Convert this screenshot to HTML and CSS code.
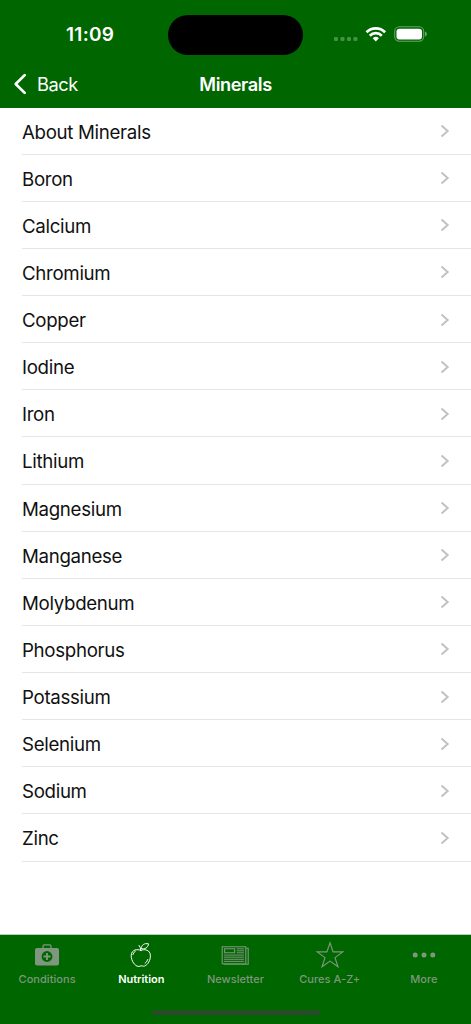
FILE: index.html
```html
<!DOCTYPE html>
<html lang="en">
<head>
<meta charset="utf-8">
<title>Minerals</title>
<link rel="stylesheet" href="styles.css">
</head>
<body>
<div class="screen">
  <header class="header">
    <div class="status">
      <div class="time">11:09</div>
      <div class="island"></div>
      <svg class="indicators" width="96" height="20" viewBox="0 0 96 20">
        <g fill="#fff" fill-opacity=".28"><rect x="3" y="11" width="4" height="4" rx="1.3"/><rect x="9.5" y="11" width="4" height="4" rx="1.3"/><rect x="16" y="11" width="4" height="4" rx="1.3"/><rect x="22.4" y="11" width="4" height="4" rx="1.3"/></g>
        <g fill="none" stroke="#fff" stroke-width="2.7"><path d="M35.5 6.2a13.2 13.2 0 0 1 18.6 0"/><path d="M38.8 9.7a8.4 8.4 0 0 1 12 0"/></g>
        <path d="M44.8 15.4l-3.1-3.2a4.5 4.5 0 0 1 6.2 0z" fill="#fff"/>
        <rect x="63.7" y="0.8" width="29" height="14.4" rx="4.6" fill="none" stroke="#fff" stroke-opacity=".4" stroke-width="1.1"/>
        <rect x="65.5" y="2.7" width="25.5" height="10.7" rx="2.9" fill="#fff"/>
        <path d="M94.1 5.6q1.7.7 1.7 2.4t-1.7 2.4z" fill="#fff" fill-opacity=".5"/>
      </svg>
    </div>
    <nav class="navbar">
      <div class="back">
        <svg width="14" height="22" viewBox="0 0 14 22"><path d="M11.7 2.1L2.7 11l9 8.9" fill="none" stroke="#fff" stroke-width="2.7" stroke-linecap="round" stroke-linejoin="round"/></svg>
        <span class="back-label">Back</span>
      </div>
      <h1 class="title">Minerals</h1>
      <div></div>
    </nav>
  </header>
  <svg class="defs" width="0" height="0"><symbol id="chevron" viewBox="0 0 10 14"><path d="M1.5 1.4L7.7 7l-6.2 5.6" fill="none" stroke="#c2c2c4" stroke-width="2"/></symbol></svg>
  <main class="list">
    <div class="row"><span>About Minerals</span><svg class="chevron"><use href="#chevron"/></svg></div>
    <div class="row"><span>Boron</span><svg class="chevron"><use href="#chevron"/></svg></div>
    <div class="row"><span>Calcium</span><svg class="chevron"><use href="#chevron"/></svg></div>
    <div class="row"><span>Chromium</span><svg class="chevron"><use href="#chevron"/></svg></div>
    <div class="row"><span>Copper</span><svg class="chevron"><use href="#chevron"/></svg></div>
    <div class="row"><span>Iodine</span><svg class="chevron"><use href="#chevron"/></svg></div>
    <div class="row"><span>Iron</span><svg class="chevron"><use href="#chevron"/></svg></div>
    <div class="row"><span>Lithium</span><svg class="chevron"><use href="#chevron"/></svg></div>
    <div class="row"><span>Magnesium</span><svg class="chevron"><use href="#chevron"/></svg></div>
    <div class="row"><span>Manganese</span><svg class="chevron"><use href="#chevron"/></svg></div>
    <div class="row"><span>Molybdenum</span><svg class="chevron"><use href="#chevron"/></svg></div>
    <div class="row"><span>Phosphorus</span><svg class="chevron"><use href="#chevron"/></svg></div>
    <div class="row"><span>Potassium</span><svg class="chevron"><use href="#chevron"/></svg></div>
    <div class="row"><span>Selenium</span><svg class="chevron"><use href="#chevron"/></svg></div>
    <div class="row"><span>Sodium</span><svg class="chevron"><use href="#chevron"/></svg></div>
    <div class="row"><span>Zinc</span><svg class="chevron"><use href="#chevron"/></svg></div>
  </main>
  <footer class="tabs">
    <div class="tab">
      <svg width="30" height="30" viewBox="0 0 30 30"><path d="M11 8V6.2q0-1.4 1.4-1.4h5.2q1.4 0 1.4 1.4V8" fill="none" stroke="currentColor" stroke-width="1.3"/><rect x="3" y="8" width="24" height="17.5" rx="2" fill="currentColor"/><circle cx="15" cy="16.5" r="5.4" fill="#006600"/><path d="M15 13v7M11.5 16.5h7" stroke="currentColor" stroke-width="1.9"/></svg>
      <span>Conditions</span>
    </div>
    <div class="tab active">
      <svg width="30" height="30" viewBox="0 0 30 30" fill="none" stroke="currentColor" stroke-width="1" stroke-linecap="round"><path d="M14.8 10.4C11.7 8.8 5.3 9.3 5.2 15.6c0 5.4 3.8 10.5 7 10.8 1.5.2 2.1-.6 3.1-.6s2 .7 3.3.2c3.2-1.2 5.9-5.8 5.8-10.3-.1-6.1-6.1-7-9.6-5.3z"/><path d="M14.7 10.6q.1-3.3-1.6-5.2M15.1 8.6c.2-3.7 3.2-5.6 7.4-4.8-.4 3.9-3.8 5.9-7.4 4.8zM6.9 14.6q.3-2.4 2.3-3.2M21.8 19.5q-.8 2.5-2.7 3.8"/></svg>
      <span>Nutrition</span>
    </div>
    <div class="tab">
      <svg width="30" height="30" viewBox="0 0 30 30" fill="none" stroke="currentColor"><path d="M2.2 6.7h23.6v17H2.2zM26 8.2h2.2v16H3.6" stroke-width="1.1"/><path d="M4.6 8.7h10v4h-10z" stroke-width="1.1"/><path d="M16.7 8.8h7.3M16.7 10.8h7.3M16.7 12.8h7.3M4 15.1h20M4 17.2h20M4 19.3h20M4 21.4h20" stroke-width=".95"/></svg>
      <span>Newsletter</span>
    </div>
    <div class="tab">
      <svg width="30" height="30" viewBox="0 0 30 30"><path d="M15 2.8l3.1 9.1h9.7L20 17.6l3 9.1-8-5.6-8 5.6 3-9.1-7.8-5.7h9.7z" fill="none" stroke="currentColor" stroke-width="1.15"/></svg>
      <span>Cures A-Z+</span>
    </div>
    <div class="tab">
      <svg width="30" height="30" viewBox="0 0 30 30" fill="currentColor"><circle cx="6.2" cy="15" r="2.5"/><circle cx="15" cy="15" r="2.5"/><circle cx="23.8" cy="15" r="2.5"/></svg>
      <span>More</span>
    </div>
    <div class="home"></div>
  </footer>
</div>
</body>
</html>
```
FILE: styles.css
```css
* { box-sizing: border-box; }
body { margin: 0; background: #fff; font-family: Inter, "Liberation Sans", sans-serif; }
.screen { width: 471px; height: 1024px; display: flex; flex-direction: column; overflow: hidden; }
.header { height: 107.5px; flex: none; background: #006600; color: #fff; }
.status { height: 61px; padding-top: 15px; display: grid; grid-template-columns: 168px 135px 168px; }
.time { padding: 8px 0 0 66px; font-size: 19px; line-height: 24px; font-weight: 600; letter-spacing: 0.3px; }
.island { height: 40px; border-radius: 20px; background: #000; }
.indicators { margin: 11px 0 0 28px; }
.navbar { height: 46px; display: grid; grid-template-columns: 1fr auto 1fr; align-items: center; }
.back { display: flex; align-items: center; padding-left: 13px; gap: 10px; }
.back-label { font-size: 18.3px; line-height: 24px; letter-spacing: -0.5px; }
.title { margin: 0; font-size: 18.2px; line-height: 24px; font-weight: 600; letter-spacing: -0.4px; }
.defs { position: absolute; }
.list { flex: 1; color: #111; }
.row { height: 47.13px; margin-left: 22px; padding-right: 21px; border-bottom: 1px solid #e6e6e7; display: flex; align-items: center; justify-content: space-between; font-size: 18.7px; line-height: 24px; letter-spacing: -0.32px; }
.row span { padding-top: 4px; }
.chevron { width: 10px; height: 14px; margin-top: 1px; }
.tabs { height: 90px; flex: none; position: relative; border-top: 1px solid #b4ceb4; background: #006600; display: grid; grid-template-columns: repeat(5, 1fr); }
.tab { display: flex; flex-direction: column; align-items: center; padding-top: 5px; color: #7f967f; font-size: 11px; line-height: 14px; font-weight: 500; letter-spacing: 0.05px; white-space: nowrap; }
.tab svg { flex: none; margin-bottom: 2px; }
.tab.active { color: #fff; font-weight: 600; letter-spacing: -0.05px; }
.home { position: absolute; left: 152px; bottom: 9px; width: 168px; height: 5px; border-radius: 3px; background: #294b29; }
```
